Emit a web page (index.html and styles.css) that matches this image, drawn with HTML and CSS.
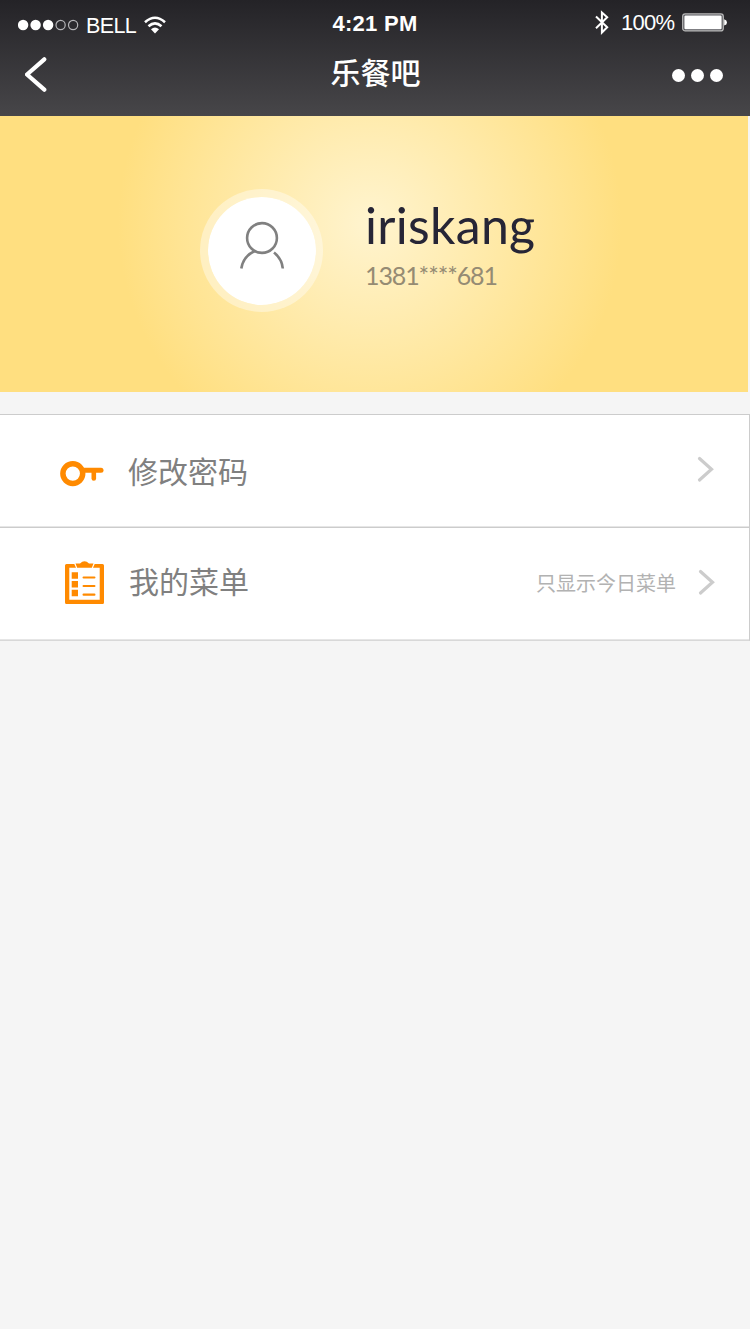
FILE: index.html
```html
<!DOCTYPE html>
<html lang="zh-CN">
<head>
<meta charset="utf-8">
<title>乐餐吧</title>
<link rel="stylesheet" href="styles.css">
</head>
<body>
<header class="header">
  <div class="status">
    <div class="status-left">
      <svg class="signal" width="62" height="12" viewBox="0 0 62 12">
        <g fill="#fff"><circle cx="5.1" cy="6" r="5.2"/><circle cx="17.6" cy="6" r="5.2"/><circle cx="30.1" cy="6" r="5.2"/></g>
        <g fill="none" stroke="#b5b5b8" stroke-width="1.2"><circle cx="42.6" cy="6" r="4.6"/><circle cx="55.1" cy="6" r="4.6"/></g>
      </svg>
      <span class="carrier">BELL</span>
      <svg class="wifi" width="22" height="18" viewBox="0 0 22 18">
        <g fill="none" stroke="#fff" stroke-width="2.6"><path d="M1 6.2Q11-2.7 21 6.2"/><path d="M4.5 10.200Q11 4.400 17.500 10.200"/></g>
        <path d="M7 13.300Q11 9.500 15 13.300L11 17.500Z" fill="#fff"/>
      </svg>
    </div>
    <div class="clock">4:21 PM</div>
    <div class="status-right">
      <svg class="bluetooth" width="14" height="25" viewBox="0 0 14 25"><path d="M1 6.500L12.200 17.300 6.900 22.500V2.500L12.200 7.300 1 18.300" fill="none" stroke="#fff" stroke-width="2"/></svg>
      <span class="percent">100%</span>
      <svg class="battery" width="45" height="19" viewBox="0 0 45 19"><rect x=".7" y=".9" width="40.600" height="17" rx="2.500" fill="#55555a" stroke="#bbb" stroke-width="1.200"/><rect x="2.400" y="2.500" width="37.200" height="13.800" rx="1.200" fill="#fff"/><path d="M42.200 6.200q2.800.8 2.800 3.200t-2.800 3.200z" fill="#fff"/></svg>
    </div>
  </div>
  <nav class="nav">
    <svg class="back" width="22" height="36" viewBox="0 0 22 36"><path d="M19.300 2.300L2 17.500 19.300 32.700" fill="none" stroke="#fff" stroke-width="4.200" stroke-linecap="round" stroke-linejoin="round"/></svg>
    <h1 class="title">乐餐吧</h1>
    <svg class="more" width="52" height="14" viewBox="0 0 52 14" fill="#fff"><circle cx="6.500" cy="7.500" r="6.500"/><circle cx="25.500" cy="7.500" r="6.500"/><circle cx="44.500" cy="7.500" r="6.500"/></svg>
  </nav>
</header>
<main>
  <section class="profile">
    <div class="avatar">
      <svg width="46" height="50" viewBox="0 0 46 50" fill="none" stroke="#808080" stroke-width="2.600"><circle cx="23" cy="17" r="14.900"/><path d="M2.300 47.500Q4 35.500 15.800 30"/><path d="M35 31.500Q43 38 43.800 47.500"/></svg>
    </div>
    <div class="identity">
      <div class="name">iriskang</div>
      <div class="phone">1381****681</div>
    </div>
  </section>
  <section class="menu">
    <div class="row">
      <svg class="key" width="44" height="27" viewBox="0 0 44 27" fill="none" stroke="#ff8a00"><circle cx="12.800" cy="13.600" r="9.900" stroke-width="5.500"/><path d="M23 10.300H41" stroke-width="5" stroke-linecap="round"/><path d="M33.800 11V18.500" stroke-width="4.600" stroke-linecap="round"/></svg>
      <span class="label">修改密码</span>
      <svg class="arrow" width="17" height="27" viewBox="0 0 17 27"><path d="M2.500 2.500L14.500 13.300 2.500 24" fill="none" stroke="#ccc" stroke-width="3.200" stroke-linecap="round"/></svg>
    </div>
    <div class="row row-orders">
      <svg class="list" width="39" height="43" viewBox="0 0 39 43" fill="#ff8a00"><path fill-rule="evenodd" d="M1.500 3H9.300L11 6.800H4.300V38.800H34.700V6.800H28L29.700 3H37.500Q39 3 39 4.500V41.500Q39 43 37.500 43H1.500Q0 43 0 41.500V4.500Q0 3 1.500 3Z"/><path d="M10.500 2.600H15Q19.500-2.300 24 2.600H28.500L26.800 6.700H12.200Z"/><path d="M6.700 11.300h6.300v6.500H6.700zM6.700 20h6.300v6.500H6.700zM6.700 28.700h6.300v6.500H6.700z"/><path d="M18.600 16.500H29.400M18.600 25H29.400M18.600 33.700H29.400" stroke="#ff8a00" stroke-width="2.200" stroke-linecap="round"/></svg>
      <span class="label">我的菜单</span>
      <span class="hint">只显示今日菜单</span>
      <svg class="arrow" width="17" height="27" viewBox="0 0 17 27"><path d="M2.500 2.500L14.500 13.300 2.500 24" fill="none" stroke="#ccc" stroke-width="3.200" stroke-linecap="round"/></svg>
    </div>
  </section>
</main>
</body>
</html>
```
FILE: styles.css
```css
* { box-sizing: border-box; }
body {
  margin: 0;
  min-height: 1329px;
  background: #f5f5f5;
  font-family: "Liberation Sans", "Noto Sans CJK SC", sans-serif;
}
svg { display: block; flex: none; }
.header {
  height: 116px;
  background: linear-gradient(#242327, #474649);
  color: #fff;
}
.status {
  height: 46px;
  display: grid;
  grid-template-columns: 1fr auto 1fr;
  line-height: 24px;
  white-space: nowrap;
}
.status-left { display: flex; padding-left: 18px; }
.signal { margin-top: 19px; }
.carrier { width: 59px; padding: 14px 0 0 6px; font-size: 21.500px; letter-spacing: -.6px; }
.wifi { margin: 16px 0 0 5px; }
.clock { padding-top: 12px; font-size: 22px; font-weight: 700; letter-spacing: .3px; }
.status-right { display: flex; justify-content: flex-end; padding-right: 23px; }
.bluetooth { margin: 10px 12px 0 0; }
.percent { width: 61px; padding-top: 11px; font-size: 22px; letter-spacing: -.7px; }
.battery { margin-top: 13px; }
.nav {
  height: 70px;
  display: grid;
  grid-template-columns: 1fr auto 1fr;
}
.back { margin: 11px 0 0 25px; }
.title {
  margin: 4px 0 0 1px;
  font: 500 30px/42px "Noto Sans CJK SC", sans-serif;
}
.more { margin: 22px 26px 0 0; justify-self: end; }
.profile {
  width: 748px;
  height: 276px;
  padding: 73px 0 0 200px;
  display: flex;
  background: radial-gradient(circle 252px at 370px 107px, #fff4cf, #ffdf80);
}
.avatar {
  width: 123px;
  height: 123px;
  display: flex;
  justify-content: center;
  padding-top: 24px;
  border: 8px solid rgba(255, 255, 255, .4);
  border-right-width: 7px;
  border-bottom-width: 7px;
  border-radius: 50%;
  background: #fff padding-box;
}
.identity { padding-left: 42px; }
.name {
  margin-top: 6px;
  font: 400 50px/60px Lato, sans-serif;
  letter-spacing: .3px;
  color: #262536;
}
.phone {
  margin-top: 5px;
  font: 400 25px/30px Lato, sans-serif;
  letter-spacing: -1.100px;
  color: #958b73;
}
.menu {
  margin-top: 22px;
  height: 227px;
  border: 1px solid #ccc;
  border-bottom-color: #d8d8d8;
  border-left: 0;
  background: #fff;
}
.row { height: 112px; display: flex; border-bottom: 1px solid #e6e6e6; }
.row-orders { height: 113px; border-top: 1px solid #ccc; }
.key { margin: 45px 0 0 60px; }
.label {
  padding: 34px 0 0 24px;
  font: 400 30px/42px "Noto Sans CJK SC", sans-serif;
  color: #808080;
}
.arrow { margin: 41px 35px 0 auto; }
.list { margin: 33px 0 0 65px; }
.row-orders .label { padding: 31px 0 0 25px; }
.hint {
  margin-left: auto;
  padding-top: 41px;
  font: 400 20px/28px "Noto Sans CJK SC", sans-serif;
  color: #b2b2b2;
}
.row-orders .arrow { margin: 41px 34px 0 22px; }
```
